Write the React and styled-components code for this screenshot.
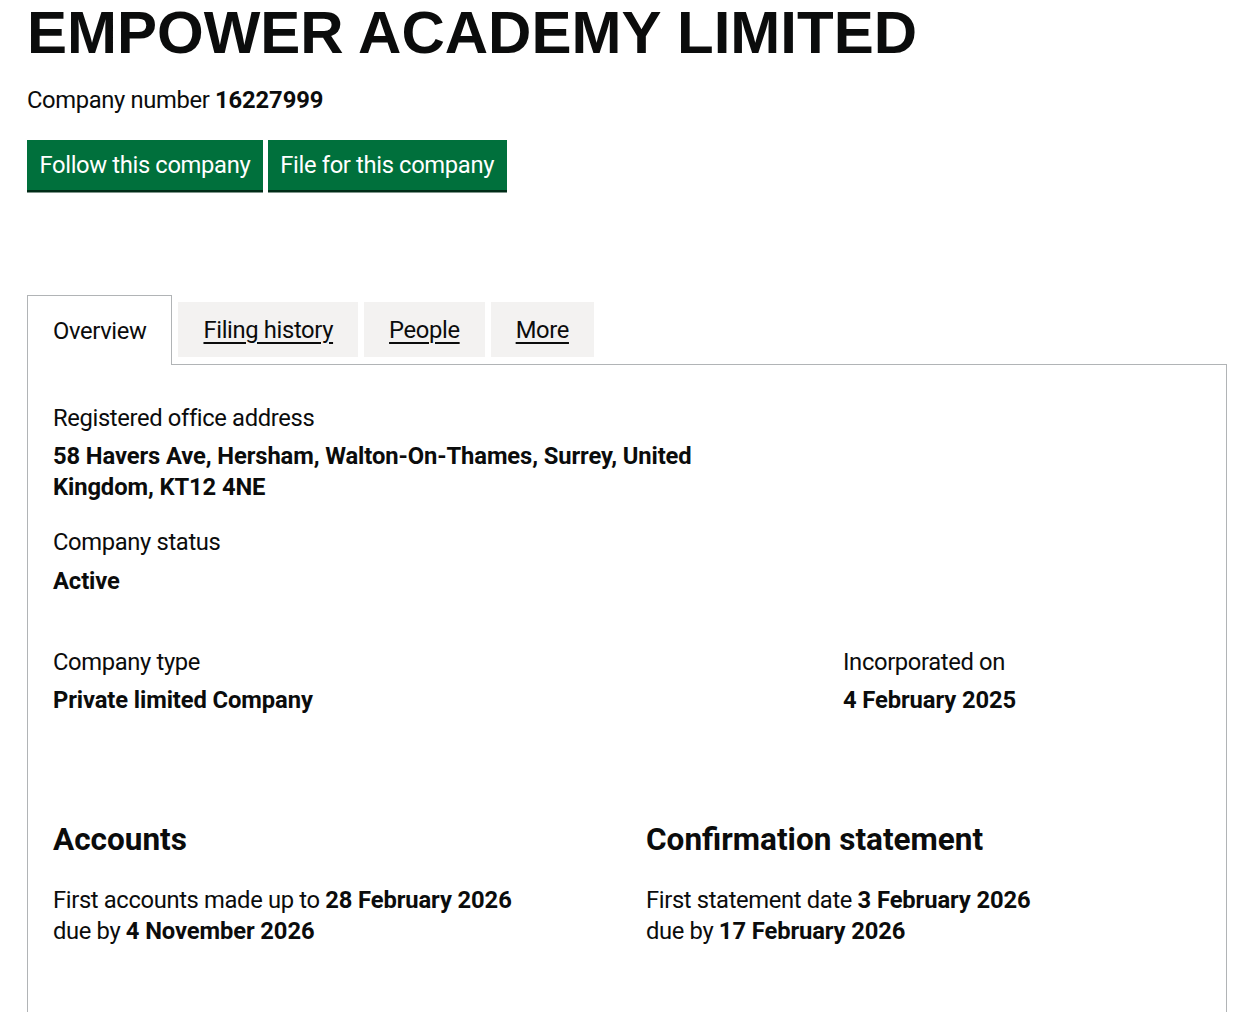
import React from "react";
import styled, { createGlobalStyle } from "styled-components";

// Style
const GlobalStyle = createGlobalStyle`
  html, body {
    margin: 0;
    padding: 0;
    background: #ffffff;
  }

  body {
    font-family: Roboto, "Liberation Sans", Arial, sans-serif;
    color: #0b0c0c;
    letter-spacing: -0.35px;
  }

  strong {
    font-weight: 700;
    letter-spacing: -0.1px;
  }
`;

const Page = styled.main`
  padding: 2px 24px 0 27px;
`;

const CompanyName = styled.h1`
  margin: 0;
  font-family: "Liberation Sans", Arial, sans-serif;
  font-size: 60px;
  line-height: 62.5px;
  font-weight: 700;
  letter-spacing: 0;
`;

const CompanyNumber = styled.p`
  margin: 20px 0 0;
  font-size: 23.75px;
  line-height: 31.25px;
`;

const ButtonGroup = styled.div`
  display: flex;
  gap: 5px;
  margin-top: 24.25px;
`;

const Button = styled.a`
  display: inline-flex;
  align-items: center;
  height: 50px;
  padding: 0 12.5px;
  background-color: #00703c;
  box-shadow: 0 2.5px 0 #002d18;
  color: #ffffff;
  font-size: 23.75px;
  text-decoration: none;
  cursor: pointer;
`;

const Tabs = styled.div`
  margin-top: 105px;
`;

const TabList = styled.ul`
  display: flex;
  align-items: flex-start;
  gap: 6px;
  list-style: none;
  margin: 0;
  padding: 0;
`;

const Tab = styled.li`
  position: relative;
  z-index: ${(props) => (props.$selected ? 1 : 0)};
  display: flex;
  align-items: center;
  box-sizing: border-box;
  height: ${(props) => (props.$selected ? "70px" : "55px")};
  margin-top: ${(props) => (props.$selected ? "0" : "7px")};
  margin-bottom: ${(props) => (props.$selected ? "-1px" : "0")};
  padding: 0 25px;
  border: ${(props) => (props.$selected ? "1px solid #b1b4b6" : "none")};
  border-bottom: none;
  background-color: ${(props) => (props.$selected ? "#ffffff" : "#f3f2f1")};
  font-size: 23.75px;

  a {
    color: #0b0c0c;
    text-decoration: ${(props) => (props.$selected ? "none" : "underline")};
    text-decoration-thickness: 1.5px;
    text-underline-offset: 4px;
  }
`;

const Panel = styled.section`
  border: 1px solid #b1b4b6;
  padding: 37.5px 25px 90px;
`;

const Field = styled.dl`
  margin: ${(props) => props.$gap || "0"} 0 0;
`;

const Label = styled.dt`
  font-size: 23.75px;
  line-height: 31.25px;
`;

const Value = styled.dd`
  margin: 7px 0 0;
  max-width: ${(props) => props.$maxWidth || "none"};
  font-size: 23.75px;
  line-height: 31.25px;
  font-weight: 700;
  letter-spacing: -0.1px;
`;

const FieldRow = styled.div`
  display: grid;
  grid-template-columns: 790px 1fr;
  margin-top: 49.75px;
`;

const DueColumns = styled.div`
  display: grid;
  grid-template-columns: 593px 1fr;
  margin-top: 105px;
`;

const DueHeading = styled.h2`
  margin: 0;
  font-size: 31.5px;
  line-height: 37.5px;
  font-weight: 700;
  letter-spacing: 0;
`;

const DueText = styled.p`
  margin: 26px 0 0;
  font-size: 23.75px;
  line-height: 31.25px;
`;

const tabs = [
  { label: "Overview", selected: true },
  { label: "Filing history" },
  { label: "People" },
  { label: "More" },
];

const App = () => {
  return (
    <>
      <GlobalStyle />
      <Page>
        <CompanyName>EMPOWER ACADEMY LIMITED</CompanyName>
        <CompanyNumber>
          Company number <strong>16227999</strong>
        </CompanyNumber>

        <ButtonGroup>
          <Button>Follow this company</Button>
          <Button>File for this company</Button>
        </ButtonGroup>

        <Tabs>
          <TabList>
            {tabs.map((tab) => (
              <Tab key={tab.label} $selected={tab.selected}>
                <a href="#">{tab.label}</a>
              </Tab>
            ))}
          </TabList>

          <Panel>
            <Field>
              <Label>Registered office address</Label>
              <Value $maxWidth="700px">
                58 Havers Ave, Hersham, Walton-On-Thames, Surrey, United
                Kingdom, KT12 4NE
              </Value>
            </Field>

            <Field $gap="24px">
              <Label>Company status</Label>
              <Value>Active</Value>
            </Field>

            <FieldRow>
              <Field>
                <Label>Company type</Label>
                <Value>Private limited Company</Value>
              </Field>
              <Field>
                <Label>Incorporated on</Label>
                <Value>4 February 2025</Value>
              </Field>
            </FieldRow>

            <DueColumns>
              <div>
                <DueHeading>Accounts</DueHeading>
                <DueText>
                  First accounts made up to <strong>28 February 2026</strong>
                  <br />
                  due by <strong>4 November 2026</strong>
                </DueText>
              </div>
              <div>
                <DueHeading>Confirmation statement</DueHeading>
                <DueText>
                  First statement date <strong>3 February 2026</strong>
                  <br />
                  due by <strong>17 February 2026</strong>
                </DueText>
              </div>
            </DueColumns>
          </Panel>
        </Tabs>
      </Page>
    </>
  );
};

export default App;
